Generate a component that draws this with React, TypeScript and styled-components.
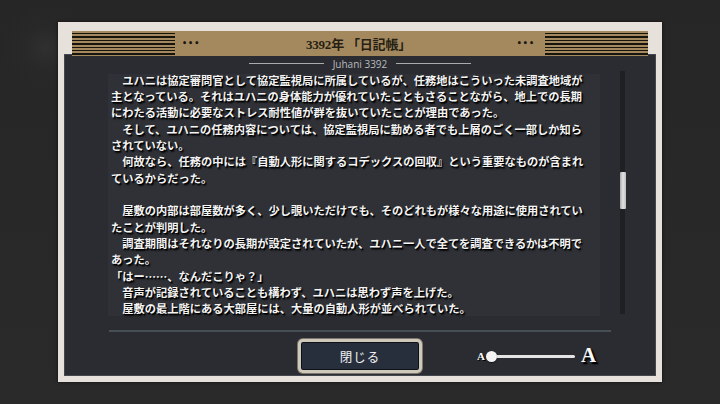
import React from "react";
import styled, { createGlobalStyle } from "styled-components";

const Global = createGlobalStyle`
  html, body { margin: 0; padding: 0; }
  body {
    width: 720px;
    height: 404px;
    overflow: hidden;
    background: #272727;
    font-family: "Noto Sans CJK JP", "Noto Sans", sans-serif;
  }
`;

const Stage = styled.div`
  width: 720px;
  height: 404px;
  box-sizing: border-box;
  padding: 22px 58px 0 58px;
  background:
    radial-gradient(circle at 45px 48px, rgba(80, 80, 80, 0.22) 0, rgba(60, 60, 60, 0.08) 22px, rgba(0, 0, 0, 0) 45px),
    linear-gradient(180deg, #262626 0%, #2a2a2a 100%);
`;

const Frame = styled.div`
  width: 604px;
  height: 360px;
  box-sizing: border-box;
  background: #e6e1db;
  padding: 9px 6px 6px 6px;
  display: flex;
  flex-direction: column;
  box-shadow: 0 0 3px rgba(0, 0, 0, 0.6);
`;

const HeaderBand = styled.div`
  position: relative;
  z-index: 1;
  margin: 0 8px;
  height: 25px;
  background: #a4895f;
  display: grid;
  grid-template-columns: 103px 1fr 103px;
  align-items: stretch;
`;

const Stripes = styled.div`
  background: repeating-linear-gradient(
    180deg,
    #a4895f 0px,
    #a4895f 2px,
    #17130d 2px,
    #17130d 3.4px
  );
`;

const HeaderMiddle = styled.div`
  display: flex;
  align-items: center;
  justify-content: space-between;
  padding: 0 10px 0 7px;
`;

const Dots = styled.span`
  color: #1c1710;
  font-family: "DejaVu Sans", sans-serif;
  font-size: 8px;
  letter-spacing: 1px;
  font-weight: bold;
`;

const Title = styled.span`
  color: #261f14;
  font-family: "Liberation Serif", "Noto Sans CJK JP", serif;
  font-size: 13px;
  font-weight: bold;
  letter-spacing: -0.2px;
`;

const Panel = styled.div`
  flex: 1;
  margin-top: -2px;
  background: #2a2c31;
  border: 1px solid #44474d;
  display: flex;
  flex-direction: column;
  box-sizing: border-box;
`;

const Subtitle = styled.div`
  height: 15px;
  display: flex;
  align-items: center;
  justify-content: center;
  gap: 9px;
  padding-top: 1px;
`;

const SubLine = styled.span`
  width: 75px;
  height: 1.5px;
  background: #a9abad;
`;

const SubText = styled.span`
  font-family: "Open Sans", "Noto Sans", sans-serif;
  font-size: 10px;
  color: #b9bbbe;
  line-height: 12px;
`;

const Body = styled.div`
  display: flex;
  padding-left: 43px;
  height: 245px;
`;

const TextBox = styled.div`
  margin-top: 3px;
  width: 492px;
  height: 242px;
  box-sizing: border-box;
  background: #2f3136;
  padding: 0.5px 0 0 3px;
  font-family: "Noto Sans CJK JP", sans-serif;
  font-weight: bold;
  font-size: 11.25px;
  color: #f4f4f4;
  text-shadow: 1px 1px 0 #000, 1.5px 1.5px 1.5px rgba(0, 0, 0, 0.9);
`;

const Line = styled.div`
  white-space: nowrap;
  height: 11.25px;
  line-height: 11.25px;
  margin-bottom: 5.1px;
`;

const ScrollTrack = styled.div`
  position: relative;
  margin-left: 20px;
  width: 5px;
  height: 243px;
  background: #1f2024;
`;

const ScrollThumb = styled.div`
  position: absolute;
  left: 0;
  width: 6px;
  top: 101px;
  height: 37px;
  border-radius: 1px;
  background: linear-gradient(90deg, #a9a9a9, #e2e2e2 50%, #bdbdbd);
`;

const Separator = styled.div`
  margin: 14px 0 0 44px;
  width: 502px;
  height: 2px;
  background: #484e56;
`;

const Footer = styled.div`
  margin-top: 7px;
  display: grid;
  grid-template-columns: 1fr 124px 1fr;
  align-items: center;
`;

const CloseButton = styled.button`
  grid-column: 2;
  width: 124px;
  height: 34px;
  box-sizing: border-box;
  padding: 0;
  border: 3px solid #cfc9bb;
  border-radius: 5px;
  background: #272f3d;
  box-shadow: inset 0 0 0 1px #0e1218, 0 0 0 1px #7d786e;
  color: #f2f2f2;
  font-family: "Noto Sans CJK JP", sans-serif;
  font-size: 12.5px;
  letter-spacing: 1px;
  cursor: pointer;
`;

const SliderWrap = styled.div`
  grid-column: 3;
  display: flex;
  align-items: center;
  margin-left: 55px;
`;

const SizeLetter = styled.span<{ $big?: boolean }>`
  font-family: "Liberation Serif", serif;
  font-weight: bold;
  color: #fafafa;
  font-size: ${(p) => (p.$big ? "21px" : "11px")};
  line-height: 1;
  text-shadow: ${(p) =>
    p.$big ? "2px 2px 0 #000, 2px 2px 2px #000" : "1px 1px 0 #000"};
  margin-left: ${(p) => (p.$big ? "6px" : "0")};
  margin-top: ${(p) => (p.$big ? "-1px" : "0")};
`;

const Track = styled.div`
  position: relative;
  width: 84px;
  height: 3px;
  margin-left: 6px;
  border-radius: 2px;
  background: #e4e4e4;
`;

const Knob = styled.div`
  position: absolute;
  left: -5px;
  top: -4px;
  width: 11px;
  height: 11px;
  border-radius: 50%;
  background: #f4f4f4;
  box-shadow: 0 1px 1px rgba(0, 0, 0, 0.5);
`;

const lines = [
  "　ユハニは協定審問官として協定監視局に所属しているが、任務地はこういった未調査地域が",
  "主となっている。それはユハニの身体能力が優れていたこともさることながら、地上での長期",
  "にわたる活動に必要なストレス耐性値が群を抜いていたことが理由であった。",
  "　そして、ユハニの任務内容については、協定監視局に勤める者でも上層のごく一部しか知ら",
  "されていない。",
  "　何故なら、任務の中には『自動人形に関するコデックスの回収』という重要なものが含まれ",
  "ているからだった。",
  "",
  "　屋敷の内部は部屋数が多く、少し覗いただけでも、そのどれもが様々な用途に使用されてい",
  "たことが判明した。",
  "　調査期間はそれなりの長期が設定されていたが、ユハニ一人で全てを調査できるかは不明で",
  "あった。",
  "「はー……、なんだこりゃ？」",
  "　音声が記録されていることも構わず、ユハニは思わず声を上げた。",
  "　屋敷の最上階にある大部屋には、大量の自動人形が並べられていた。",
];

export default function App() {
  return (
    <>
      <Global />
      <Stage>
        <Frame>
          <HeaderBand>
            <Stripes />
            <HeaderMiddle>
              <Dots>•••</Dots>
              <Title>3392年 「日記帳」</Title>
              <Dots>•••</Dots>
            </HeaderMiddle>
            <Stripes />
          </HeaderBand>
          <Panel>
            <Subtitle>
              <SubLine />
              <SubText>Juhani 3392</SubText>
              <SubLine />
            </Subtitle>
            <Body>
              <TextBox>
                {lines.map((l, i) => (
                  <Line key={i}>{l || "\u00a0"}</Line>
                ))}
              </TextBox>
              <ScrollTrack>
                <ScrollThumb />
              </ScrollTrack>
            </Body>
            <Separator />
            <Footer>
              <CloseButton>閉じる</CloseButton>
              <SliderWrap>
                <SizeLetter>A</SizeLetter>
                <Track>
                  <Knob />
                </Track>
                <SizeLetter $big>A</SizeLetter>
              </SliderWrap>
            </Footer>
          </Panel>
        </Frame>
      </Stage>
    </>
  );
}
